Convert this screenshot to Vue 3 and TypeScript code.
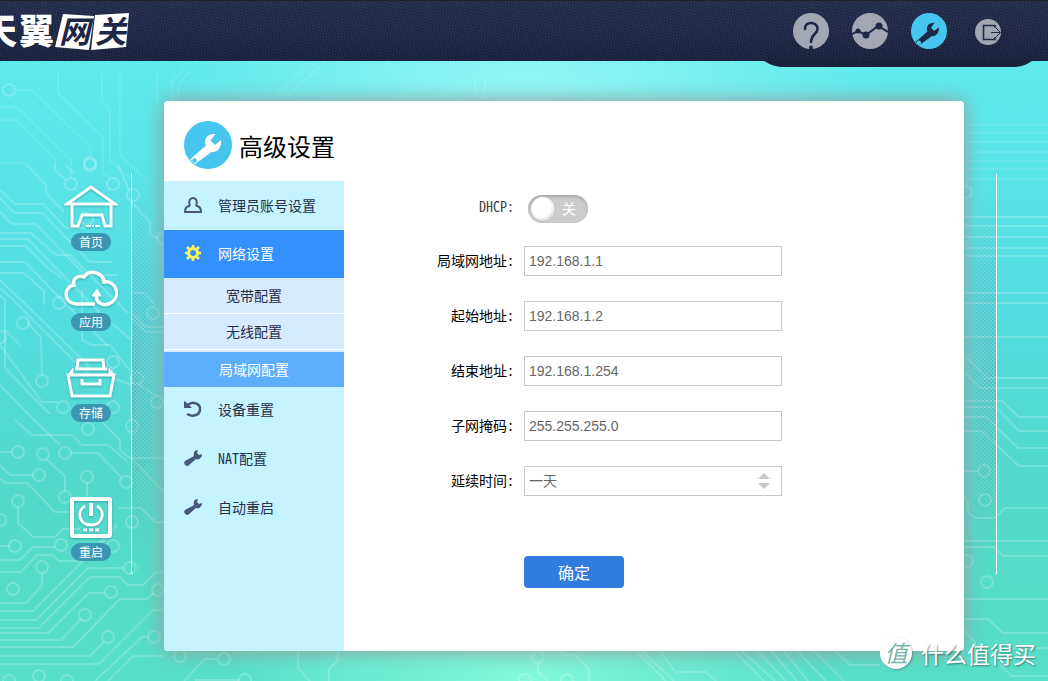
<script setup lang="ts">
import { reactive, ref } from 'vue'

interface Field {
  id: string
  label: string
  value: string
}

const dhcp = ref(false)
const lease = ref('一天')
const leaseOptions: string[] = ['一天', '一周', '一月']

const fields = reactive<Field[]>([
  { id: 'lan', label: '局域网地址', value: '192.168.1.1' },
  { id: 'start', label: '起始地址', value: '192.168.1.2' },
  { id: 'end', label: '结束地址', value: '192.168.1.254' },
  { id: 'mask', label: '子网掩码', value: '255.255.255.0' },
])

const subItems: string[] = ['宽带配置', '无线配置', '局域网配置']
const activeSub = ref(2)

const traces: string[] = [
  'M0 190L15 204H43L66 228H85', 'M0 198L14 213H42L90 262L112 262', 'M0 212L12 224H36L85 275H118',
  'M0 233H31L56 255H70L128 313', 'M0 239H28L52 264L100 313L131 340', 'M0 246H26L48 268L62 278', 'M0 262H25L52 290L108 346',
  'M0 273H24L44 291V305', 'M0 280L20 299L88 365V372', 'M0 288L10 297L78 365L90 375',
  'M0 295L5 300V330L20 345', 'M27 322L41 337L42 375', 'M0 345L42 402H58', 'M5 330V368L28 392L50 414',
  'M0 385L28 414L60 445', 'M15 420L32 435H72L82 445H108L128 462', 'M100 420L120 440V450L130 458H164',
  'M27 165L46 185V193L64 212', 'M65 165L75 174', 'M55 165V170L66 180', 'M118 165L129 190', 'M131 202L150 222V235L158 238',
  'M82 290V340L92 345H110L131 372V420', 'M113 368V378L131 385', 'M131 293H145L155 305', 'M131 312L146 327H164', 'M131 318L146 332H164', 'M138 384L157 396',
  'M0 452H12', 'M46 459L65 476V491', 'M71 453H98L121 477', 'M0 465L10 475H33',
  'M0 478L5 483H27L55 512H75', 'M18 507V523L33 537H55L63 529H80', 'M87 483V497', 'M0 546H9',
  'M0 560H20L33 547H55', 'M0 572H21L37 555H52L59 561H82L117 525', 'M42 573V585L26 603H0',
  'M0 611H33L90 554L113 532', 'M0 620H36L88 568H124', 'M0 628H39L90 577H120L128 585H143L155 573L164 571',
  'M0 633H48L89 593H105', 'M0 640H61L81 619', 'M0 647H73L120 599H147L154 593',
  'M0 656H90L104 642', 'M0 664H99L153 610H164', 'M108 681L133 656H164', 'M95 681L142 637H148',
  'M131 458L164 492', 'M118 508H141L155 522H164',
  'M217 659H205L184 681', 'M195 680H239', 'M298 651V668L310 681', 'M338 651V660L329 669V681',
  'M538 663V672L548 681', 'M561 651L566 656H576L589 669V681', 'M636 651L666 681', 'M642 651L674 681',
  'M660 651L675 672H706L716 681', 'M734 651L764 681', 'M742 651L775 681', 'M757 651L786 681',
  'M771 651L797 681', 'M784 651L808 681', 'M797 651L826 681', 'M814 651L844 681', 'M835 651L850 665H880',
  'M964 217H1048', 'M964 226H1048', 'M964 237H1048', 'M964 248H1048', 'M964 256H1048', 'M964 293H1048', 'M964 303H1048', 'M964 337H1048',
  'M964 355L987 378H1048', 'M964 371L980 388H1048', 'M964 401H1002L1019 417H1048', 'M964 407H996L1019 431H1048',
  'M964 417H986L1018 448H1048', 'M964 431H982L1019 466H1048', 'M964 471H978',
  'M964 497L968 502V512L975 518H995L1005 508H1048', 'M964 541H1048', 'M964 547H994L1003 556H1048',
  'M964 599H1048', 'M964 619H988L1003 633H1048', 'M964 630L975 642V660', 'M1000 665L1012 676H1048', 'M1012 648H1048',
]

const faintTraces: string[] = [
  'M16 90H32L90 147V157', 'M0 107H17L71 160V178', 'M0 120H16L55 158V166', 'M0 163H24L27 165', 'M58 70V93L103 137V174L113 178',
  'M102 73V100L110 110V160L132 180', 'M120 70V155L147 180', 'M157 70V101', 'M172 101V82L184 70', 'M178 101V84L192 70',
  'M277 96L306 66', 'M289 96L320 66', 'M475 80V100', 'M485 76V100', 'M964 125H1048', 'M964 133H1048', 'M964 142H1048',
  'M964 152H1048', 'M964 161H1048', 'M964 169H1048', 'M964 179H1048',
]

const pads: number[][] = [
  [9, 90], [90, 163], [71, 184], [113, 184], [90, 165], [133, 195], [87, 219], [59, 303], [23, 323], [42, 381], [63, 407],
  [113, 362], [113, 407], [137, 378], [157, 402], [153, 313], [163, 238], [0, 337],
  [18, 452], [43, 454], [65, 453], [39, 475], [87, 477], [88, 429], [126, 482], [65, 497], [18, 501], [0, 520],
  [15, 546], [61, 545], [42, 567], [13, 589], [111, 592], [85, 615], [108, 637], [154, 637], [39, 676], [130, 568],
  [132, 522], [9, 681], [67, 681], [158, 590], [113, 546], [132, 426], [180, 656], [224, 659], [245, 680],
  [538, 657], [525, 680], [567, 680], [984, 471], [985, 500], [967, 561], [987, 582], [966, 192],
]
</script>

<template>
  <div class="page">
    <svg class="circuit" viewBox="0 0 1048 681" preserveAspectRatio="xMidYMid slice" aria-hidden="true">
      <path v-for="d in traces" :key="d" :d="d" class="trace" />
      <path v-for="d in faintTraces" :key="d" :d="d" class="trace faint" />
      <circle v-for="(p, i) in pads" :key="i" :cx="p[0]" :cy="p[1]" r="6" class="trace pad" />
    </svg>

    <header class="topbar">
      <svg class="logo" width="140" height="60" viewBox="0 0 140 60" role="img" aria-label="天翼网关">
        <path d="M63 13L94 15L89 49L55 46Z M95 14L129 12L126 46L91 49Z" fill="#fff" />
        <g class="logo-text">
          <text x="-18" y="43" fill="#fff">天</text>
          <text x="19" y="43" fill="#fff">翼</text>
          <text x="59" y="42" class="dark boxed">网</text>
          <text x="95" y="42" class="dark boxed">关</text>
        </g>
      </svg>
      <nav class="tools" aria-label="工具">
        <a href="#help" aria-label="帮助">
          <svg width="36" height="36" viewBox="0 0 36 36">
            <circle cx="18" cy="18" r="18" class="disc" />
            <path d="M12 16C11 8 25 8 24.500 16C24.500 21 18 21 18 29" class="ink" stroke-width="2.600" stroke-linecap="round" />
            <circle cx="18" cy="34.500" r="2" fill="#1f2746" />
          </svg>
        </a>
        <a href="#status" aria-label="状态">
          <svg width="36" height="36" viewBox="0 0 36 36">
            <circle cx="18" cy="18" r="18" class="disc" />
            <path d="M0 21L6 18L14 22L26 13L36 19" class="ink" stroke-width="2" />
            <g fill="#1f2746">
              <circle cx="6" cy="18" r="2.500" />
              <circle cx="14" cy="22" r="3.500" />
              <circle cx="27" cy="13" r="3.500" />
            </g>
          </svg>
        </a>
        <a href="#settings" aria-label="高级设置" aria-current="page">
          <svg width="36" height="36" viewBox="0 0 48 48">
            <circle cx="24" cy="24" r="24" fill="#46c6ef" />
            <path d="M31.500 13C24 12 19 18 22 24.500L6 38.500L11 43L27.500 31C34 32 38 25 37 19L31 24L26.500 19.500Z" fill="#1f2746" />
            <circle cx="10.500" cy="39.500" r="3" fill="#46c6ef" />
          </svg>
        </a>
        <a href="#logout" aria-label="退出">
          <svg width="36" height="36" viewBox="0 0 36 36">
            <circle cx="18" cy="19" r="13" class="disc" />
            <path d="M25 12.500H13.500V26.500H25V24M25 12V15" class="ink" stroke-width="1.600" />
            <path d="M21 19.500H30M26 15L30.500 19.500L26 24" class="ink" stroke-width="1" />
          </svg>
        </a>
      </nav>
      <svg class="notch" width="268" height="7" viewBox="0 0 268 7" preserveAspectRatio="none" aria-hidden="true">
        <path d="M0 0H268C262 4 257 6 248 6H17C9 5 5 3 0 0Z" fill="#1a213d" />
      </svg>
    </header>

    <main class="main">
      <nav class="rail" aria-label="主导航">
        <a href="#home" class="rail-item">
          <svg class="glyph" width="54" height="44" viewBox="0 0 54 44">
            <path d="M3 20L27 3L51 20Z" stroke-width="3" />
            <path d="M8 20V42H14L18 31H38L41 42H47V20" stroke-width="3" />
            <path d="M22 42H27M28 42H30M31 42H36" stroke-width="2" />
          </svg>
          <span class="pill">首页</span>
        </a>
        <a href="#apps" class="rail-item apps">
          <svg class="glyph" width="54" height="44" viewBox="0 0 54 44">
            <path d="M31 40H13C-1 40-1 23 10 21C8 14 15 11 20 13C25 5 39 8 40 18C52 16 57 32 48 38C40 44 30 39 33 29" stroke-width="3.500" />
            <path d="M28 32L33 25L37 32Z" fill="#fff" stroke-width="1" />
          </svg>
          <span class="pill">应用</span>
        </a>
        <a href="#storage" class="rail-item storage">
          <svg class="glyph" width="54" height="44" viewBox="0 0 54 44">
            <path d="M13 14L14 5H39L40 14M11 14H43" stroke-width="3" />
            <path d="M4 20L8 41H46L50 20Z" stroke-width="3" />
            <path d="M4 20L9 13V20ZM50 20L45 13V20Z" fill="#fff" stroke-width="1" />
            <path d="M18 24V29H36V24" stroke-width="3" />
          </svg>
          <span class="pill">存储</span>
        </a>
        <a href="#restart" class="rail-item restart">
          <svg class="glyph" width="54" height="44" viewBox="0 0 54 44">
            <rect x="8" y="5" width="38" height="37" rx="1" stroke-width="4" />
            <path d="M21 12C12 17 15 31 27 31C39 31 42 17 33 12" stroke-width="3" />
            <path d="M27 9V22" stroke-width="4" />
            <path d="M19 36H23M25 36H29M31 36H35" stroke-width="3" />
          </svg>
          <span class="pill">重启</span>
        </a>
      </nav>

      <section class="card">
        <header class="card-head">
          <svg width="48" height="48" viewBox="0 0 48 48" aria-hidden="true">
            <circle cx="24" cy="24" r="24" fill="#46c6ef" />
            <path d="M31.500 13C24 12 19 18 22 24.500L6 38.500L11 43L27.500 31C34 32 38 25 37 19L31 24L26.500 19.500Z" fill="#fff" />
            <circle cx="10.500" cy="39.500" r="2.200" fill="#46c6ef" />
          </svg>
          <h1>高级设置</h1>
        </header>
        <div class="card-body">
          <nav class="side" aria-label="高级设置">
            <a href="#account" class="side-item">
              <svg width="18" height="18" viewBox="0 0 18 18" fill="none" stroke="#47587c" stroke-width="2">
                <path d="M6 10C4 5 6 2 9 2S14 5 12 10M6 10Q1 10 1 16H17Q17 10 12 10" />
              </svg>
              <span>管理员账号设置</span>
            </a>
            <a href="#network" class="side-item current">
              <svg width="18" height="18" viewBox="0 0 18 18" fill="none" stroke="#fdf75c">
                <circle cx="9" cy="9" r="4.500" stroke-width="3" />
                <path d="M9 1V4M9 14V17M1 9H4M14 9H17M3 3L5 5M13 13L15 15M15 3L13 5M5 13L3 15" stroke-width="2.500" />
              </svg>
              <span>网络设置</span>
            </a>
            <ul class="sub">
              <li v-for="(name, i) in subItems" :key="name">
                <a href="#lan" :class="{ on: i === activeSub }" @click.prevent="activeSub = i">{{ name }}</a>
              </li>
            </ul>
            <a href="#reset" class="side-item">
              <svg width="18" height="18" viewBox="0 0 18 18">
                <path d="M4 5C8 1 16 3 16 9C16 16 8 17 3 14" fill="none" stroke="#47587c" stroke-width="2.500" />
                <path d="M0 1L3 3L8 8H0Z" fill="#47587c" />
              </svg>
              <span>设备重置</span>
            </a>
            <a v-for="name in ['NAT配置', '自动重启']" :key="name" href="#more" class="side-item">
              <svg width="18" height="18" viewBox="0 0 18 18" fill="#47587c">
                <path d="M10 7C9 3 11 1 14 1L13 4L15 6L18 5C18 9 15 11 12 10L4 17C1 17-1 14 1 12Z" />
              </svg>
              <span>{{ name }}</span>
            </a>
          </nav>

          <form class="form" @submit.prevent>
            <div class="row switch-row">
              <label for="dhcp">DHCP:</label>
              <span class="switch">
                <input id="dhcp" v-model="dhcp" type="checkbox" role="switch" />
                <span class="switch-text" aria-hidden="true">{{ dhcp ? '开' : '关' }}</span>
              </span>
            </div>
            <div v-for="f in fields" :key="f.id" class="row">
              <label :for="f.id">{{ f.label }}:</label>
              <input :id="f.id" v-model="f.value" class="box" type="text" />
            </div>
            <div class="row">
              <label for="lease">延续时间:</label>
              <span class="select">
                <select id="lease" v-model="lease" class="box">
                  <option v-for="o in leaseOptions" :key="o">{{ o }}</option>
                </select>
                <svg class="arrows" width="12" height="16" viewBox="0 0 12 16" aria-hidden="true">
                  <path d="M0 6L6 0L12 6ZM0 10H12L6 16Z" fill="#c3c8cb" />
                </svg>
              </span>
            </div>
            <button type="submit" class="submit">确定</button>
          </form>
        </div>
      </section>

      <div class="edge" aria-hidden="true"></div>
    </main>

    <div class="mark">
      <span class="mark-badge">值</span>
      <span>什么值得买</span>
    </div>
  </div>
</template>

<style>
body {
  margin: 0;
}
</style>

<style scoped>
.page {
  position: relative;
  display: flex;
  flex-direction: column;
  min-height: 100vh;
  overflow: hidden;
  font-family: "Noto Sans Mono CJK SC", "Noto Sans CJK SC", sans-serif;
  font-size: 14px;
  color: #000;
  background:
    radial-gradient(ellipse 360px 130px at 50% 80px, rgba(160, 250, 250, 0.8), transparent),
    radial-gradient(ellipse 300px 150px at 50% 100%, rgba(140, 255, 222, 0.8), transparent),
    linear-gradient(#5fe9eb 60px, #54dde1 45%, #53d9cd 70%, #57dfc7);
}
a {
  color: inherit;
  text-decoration: none;
}
.circuit {
  position: absolute;
  inset: 0;
  width: 100%;
  height: 100%;
}
.trace {
  fill: none;
  stroke: #fff;
  stroke-width: 2;
  stroke-opacity: 0.2;
}
.faint {
  stroke-opacity: 0.1;
}
.pad {
  stroke-opacity: 0.22;
}

.topbar {
  position: relative;
  display: flex;
  justify-content: space-between;
  align-items: center;
  box-sizing: border-box;
  height: 61px;
  padding-right: 42px;
  border-top: 1px solid #222;
  background:
    repeating-linear-gradient(100deg, rgba(255, 255, 255, 0.04) 0 1px, transparent 1px 3px),
    repeating-linear-gradient(10deg, rgba(0, 0, 0, 0.14) 0 1px, transparent 1px 3px),
    linear-gradient(#262f52, #1b2241);
}
.logo-text {
  font-family: "Noto Sans CJK SC", sans-serif;
  font-size: 35px;
  font-weight: 900;
}
.boxed {
  font-size: 31px;
  font-style: italic;
  font-weight: 700;
}
.dark {
  fill: #1f2746;
}
.tools {
  display: flex;
  gap: 23px;
}
.tools svg {
  display: block;
}
.disc {
  fill: #a3a6b3;
}
.ink {
  fill: none;
  stroke: #1f2746;
}
.notch {
  position: absolute;
  top: 100%;
  right: 16px;
}

.main {
  position: relative;
  flex: 1;
  display: grid;
  grid-template-columns: 132px minmax(0, 1fr) 52px;
  column-gap: 32px;
  padding: 40px 0 30px;
}
.rail,
.edge {
  position: relative;
  box-sizing: border-box;
  height: 400px;
  margin-top: 73px;
}
.rail {
  display: flex;
  flex-direction: column;
  align-items: flex-end;
  padding: 10px 12px 0 0;
  border-right: 1px solid #fff;
}
.edge {
  border-left: 1px solid #fff;
}
.rail::after,
.edge::after {
  content: "";
  position: absolute;
  top: 0;
  bottom: 0;
  width: 32px;
  background: conic-gradient(#7f8fa0 25%, transparent 0 50%, #7f8fa0 0 75%, transparent 0) 0 0 / 4px 4px;
  opacity: 0.6;
}
.rail::after {
  left: 100%;
  margin-left: 1px;
  mask-image: radial-gradient(ellipse 32px 200px at left, #000, transparent);
}
.edge::after {
  right: 100%;
  margin-right: 1px;
  mask-image: radial-gradient(ellipse 32px 200px at right, #000, transparent);
}
.rail-item {
  display: flex;
  flex-direction: column;
  align-items: center;
  gap: 5px;
  width: 56px;
}
.apps {
  margin-top: 13px;
}
.storage {
  margin-top: 24px;
}
.restart {
  margin-top: 72px;
}
.glyph {
  fill: none;
  stroke: #fff;
  filter: drop-shadow(0 1px 1px rgba(0, 70, 90, 0.35));
}
.pill {
  width: 40px;
  border-radius: 9px;
  background: #3b97b1;
  color: #fff;
  font-size: 12px;
  line-height: 18px;
  text-align: center;
}

.card {
  display: flex;
  flex-direction: column;
  border-radius: 4px;
  background: #fff;
  box-shadow: 0 0 20px #999;
  overflow: hidden;
}
.card-head {
  display: flex;
  align-items: center;
  gap: 7px;
  box-sizing: border-box;
  height: 80px;
  padding: 8px 20px 0;
}
.card-head h1 {
  margin: 0;
  padding-top: 2px;
  font-size: 24px;
  font-weight: 400;
  line-height: 48px;
}
.card-body {
  flex: 1;
  display: flex;
}
.side {
  width: 180px;
  background: #c5f3ff;
  color: #252f4c;
}
.side-item {
  display: flex;
  align-items: center;
  gap: 16px;
  box-sizing: border-box;
  height: 48px;
  padding-left: 20px;
  margin-bottom: 1px;
}
.side-item.current {
  margin-bottom: 0;
  padding-bottom: 2px;
  background: #3590ff;
  color: #fff;
}
.sub ~ .side-item {
  padding-bottom: 4px;
}
.sub {
  margin: 0;
  padding: 0;
  list-style: none;
  background: #d5ebff;
  text-align: center;
}
.sub a {
  display: block;
  line-height: 35px;
  border-bottom: 1px solid #fff;
}
.sub .on {
  margin-top: 2px;
  border-bottom: 0;
  background: #5daeff;
  color: #fff;
}

.form {
  flex: 1;
  padding: 14px 20px 40px 0;
}
.row {
  display: grid;
  grid-template-columns: 170px minmax(0, 258px);
  column-gap: 10px;
  align-items: center;
  margin-bottom: 25px;
}
.row label {
  padding-bottom: 2px;
  line-height: 24px;
  text-align: right;
}
.switch-row {
  align-items: start;
  margin-bottom: 23px;
}
.switch-row label {
  color: #444;
  line-height: 22px;
}
.switch {
  position: relative;
  width: 60px;
  height: 28px;
  margin-left: 4px;
}
.switch input {
  appearance: none;
  display: block;
  width: 60px;
  height: 28px;
  margin: 0;
  border-radius: 14px;
  background: #ccc;
  box-shadow: inset 0 2px 3px #aaa;
}
.switch input::before {
  content: "";
  display: block;
  width: 26px;
  height: 26px;
  border: 1px solid #bbb;
  box-sizing: border-box;
  border-radius: 50%;
  background: #fff;
  box-shadow: inset -2px -2px 3px #ddd;
  position: absolute;
  left: 2px;
  top: 1px;
}
.switch input:checked::before {
  left: 32px;
}
.switch-text {
  position: absolute;
  top: 0;
  right: 12px;
  color: #fff;
  line-height: 26px;
  pointer-events: none;
}
.box {
  appearance: none;
  display: block;
  box-sizing: border-box;
  width: 100%;
  height: 30px;
  padding: 0 4px;
  border: 1px solid #c8c8c8;
  border-radius: 0;
  background: #fff;
  color: #666;
  font: 14px "Liberation Sans", "Noto Sans CJK SC", sans-serif;
}
.select {
  position: relative;
}
.arrows {
  position: absolute;
  right: 12px;
  top: 7px;
  pointer-events: none;
}
.submit {
  display: block;
  width: 100px;
  height: 32px;
  margin: 60px 0 0 180px;
  padding: 0;
  border: 0;
  border-radius: 4px;
  background: #317ddf;
  color: #fff;
  font: 16px "Noto Sans CJK SC", sans-serif;
}

.mark {
  position: absolute;
  right: 12px;
  bottom: 11px;
  display: flex;
  align-items: center;
  gap: 9px;
  color: #fff;
  font-family: "Noto Sans CJK SC", sans-serif;
  font-size: 23px;
  line-height: 34px;
  text-shadow: 1px 1px 2px rgba(0, 0, 0, 0.45);
}
.mark-badge {
  width: 32px;
  height: 32px;
  border-radius: 50%;
  background: #fff;
  box-shadow: 1px 1px 2px rgba(0, 0, 0, 0.25);
  color: #75b5a7;
  font-style: italic;
  line-height: 31px;
  text-align: center;
  text-shadow: none;
}
</style>
